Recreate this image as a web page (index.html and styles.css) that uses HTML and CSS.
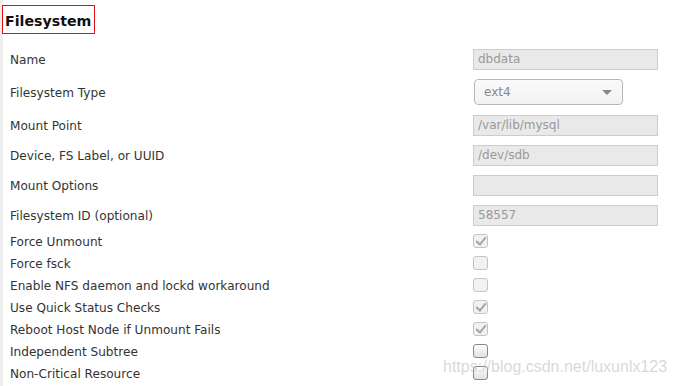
FILE: index.html
```html
<!DOCTYPE html>
<html lang="en">
<head>
    <meta charset="UTF-8">
    <meta name="viewport" content="width=device-width, initial-scale=1.0">
    <title>Filesystem</title>
    <link rel="stylesheet" href="styles.css">
</head>
<body>

<div class="page">
    <div class="header">
        <h2 class="title">Filesystem</h2>
    </div>

    <div class="form">
        <div class="row">
            <label>Name</label>
            <input class="field" type="text" value="dbdata" disabled>
        </div>
        <div class="row tall">
            <label>Filesystem Type</label>
            <div class="select">
                <span>ext4</span>
                <span class="arrow"></span>
            </div>
        </div>
        <div class="row">
            <label>Mount Point</label>
            <input class="field" type="text" value="/var/lib/mysql" disabled>
        </div>
        <div class="row">
            <label>Device, FS Label, or UUID</label>
            <input class="field" type="text" value="/dev/sdb" disabled>
        </div>
        <div class="row">
            <label>Mount Options</label>
            <input class="field" type="text" value="" disabled>
        </div>
        <div class="row">
            <label>Filesystem ID (optional)</label>
            <input class="field" type="text" value="58557" disabled>
        </div>

        <div class="row check">
            <label>Force Unmount</label>
            <span class="box disabled checked"></span>
        </div>
        <div class="row check">
            <label>Force fsck</label>
            <span class="box disabled"></span>
        </div>
        <div class="row check">
            <label>Enable NFS daemon and lockd workaround</label>
            <span class="box disabled"></span>
        </div>
        <div class="row check">
            <label>Use Quick Status Checks</label>
            <span class="box disabled checked"></span>
        </div>
        <div class="row check">
            <label>Reboot Host Node if Unmount Fails</label>
            <span class="box disabled checked"></span>
        </div>
        <div class="row check">
            <label>Independent Subtree</label>
            <span class="box"></span>
        </div>
        <div class="row check">
            <label>Non-Critical Resource</label>
            <span class="box"></span>
        </div>
    </div>

    <div class="watermark">https://blog.csdn.net/luxunlx123</div>
</div>

</body>
</html>
```

FILE: styles.css
```css
/* Page */
body {
    margin: 0;
    background: #ffffff;
    font-family: 'DejaVu Sans', Verdana, sans-serif;
    color: #333333;
    overflow: hidden;
}

.page {
    position: relative;
    height: 386px;
    border-left: 3px solid #eeeeee;
}

/* Heading with the red outline */
.header {
    height: 44px;
    padding-top: 5px;
    box-sizing: border-box;
}

.title {
    display: inline-block;
    margin: 0 0 0 -1px;
    width: 93px;
    height: 29px;
    box-sizing: border-box;
    border: 1px solid #e01010;
    padding: 8px 0 0 2px;
    font-size: 14.2px;
    line-height: 15px;
    font-weight: bold;
    color: #111111;
}

/* Form rows */
.row {
    display: flex;
    align-items: center;
    height: 30px;
    padding-left: 7px;
}

.row.tall {
    height: 36px;
}

.row.check {
    height: 22px;
}

.row label {
    width: 463px;
    padding-top: 2px;
    font-size: 12.1px;
}

.field {
    width: 185px;
    height: 21px;
    box-sizing: border-box;
    margin: 0;
    padding: 0 4px;
    border: 1px solid #cccccc;
    background: #e9e9e9;
    font-family: 'DejaVu Sans', Verdana, sans-serif;
    font-size: 12px;
    color: #999999;
}

/* Dropdown */
.select {
    display: flex;
    align-items: center;
    justify-content: space-between;
    width: 149px;
    height: 26px;
    box-sizing: border-box;
    margin-left: 1px;
    padding: 0 9px;
    border: 1px solid #b8b8b8;
    border-radius: 4px;
    background: linear-gradient(#fafafa, #f2f2f2);
    font-size: 12px;
    color: #888888;
}

.arrow {
    width: 0;
    height: 0;
    border-left: 5px solid transparent;
    border-right: 5px solid transparent;
    border-top: 5px solid #888888;
    margin-right: 1px;
}

/* Checkboxes */
.box {
    position: relative;
    width: 15px;
    height: 14px;
    box-sizing: border-box;
    border: 1px solid #888888;
    border-radius: 3px;
    background: linear-gradient(#fdfdfd, #e2e2e2);
}

.box.disabled {
    border-color: #c4c4c4;
    background: #f2f2f2;
}

.box.checked::after {
    content: '';
    position: absolute;
    left: 4px;
    top: 0;
    width: 4px;
    height: 8px;
    border-right: 2px solid #a4a4a4;
    border-bottom: 2px solid #a4a4a4;
    transform: rotate(40deg);
}

/* Blog watermark over the corner */
.watermark {
    position: absolute;
    left: 440px;
    top: 358px;
    font-family: 'Liberation Sans', Arial, sans-serif;
    font-size: 16px;
    color: rgba(190, 190, 190, 0.6);
}
```
